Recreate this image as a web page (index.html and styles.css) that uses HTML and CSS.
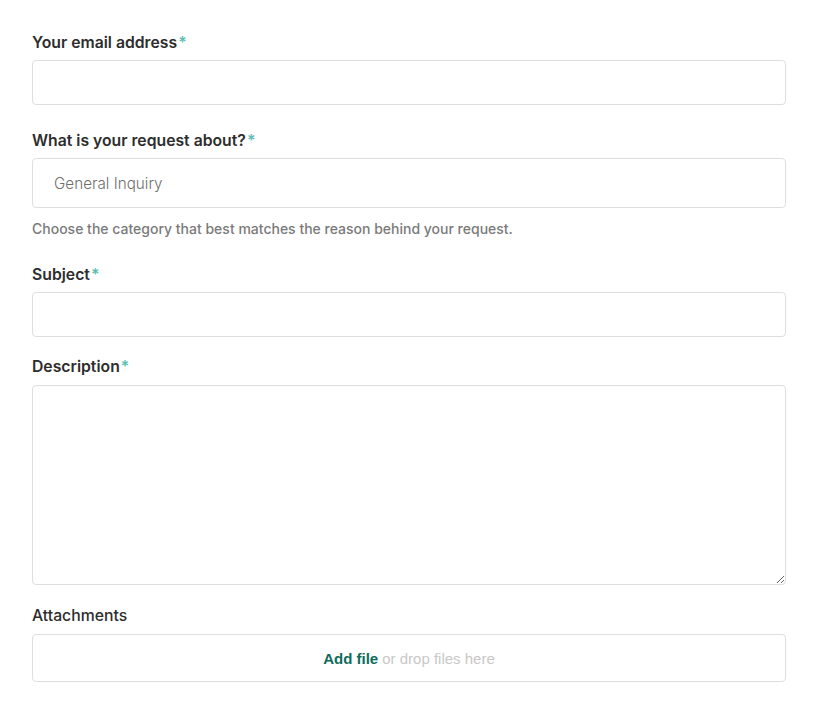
FILE: index.html
```html
<!DOCTYPE html>
<html lang="en">
<head>
<meta charset="utf-8">
<title>Submit a request</title>
<link rel="stylesheet" href="styles.css">
</head>
<body>
<form class="form">
  <div class="field field-email">
    <label class="label">Your email address<span class="req">*</span></label>
    <input class="input" type="email">
  </div>
  <div class="field field-about">
    <label class="label">What is your request about?<span class="req">*</span></label>
    <div class="select">General Inquiry</div>
    <p class="hint">Choose the category that best matches the reason behind your request.</p>
  </div>
  <div class="field field-subject">
    <label class="label">Subject<span class="req">*</span></label>
    <input class="input" type="text">
  </div>
  <div class="field field-desc">
    <label class="label">Description<span class="req">*</span></label>
    <textarea class="textarea"></textarea>
  </div>
  <div class="field field-attach">
    <label class="label">Attachments</label>
    <div class="dropzone"><a class="add-file">Add file</a> <span class="drop-text">or drop files here</span></div>
  </div>
</form>
</body>
</html>
```
FILE: styles.css
```css
html, body {
  margin: 0;
  padding: 0;
  background: #ffffff;
}
body {
  font-family: Inter, "Noto Sans", sans-serif;
  color: #2b2b2b;
}
.form {
  width: 754px;
  padding: 33px 32px 0 32px;
  display: flex;
  flex-direction: column;
}
.field {
  display: flex;
  flex-direction: column;
}
.field-email { margin-bottom: 26px; }
.field-about { margin-bottom: 27px; }
.field-subject { margin-bottom: 20px; }
.field-desc { margin-bottom: 21px; }
.label {
  font-size: 15.75px;
  line-height: 20px;
  font-weight: 600;
  color: #2d2d2d;
  margin-bottom: 7px;
}
.field-desc .label { margin-bottom: 8px; }
.field-attach .label { margin-bottom: 8px; font-weight: 500; }
.req {
  color: #5cbfb3;
  margin-left: 1px;
}
.input {
  box-sizing: border-box;
  height: 45px;
  width: 100%;
  border: 1px solid #dedede;
  border-radius: 4px;
  margin: 0;
  padding: 0 20px;
  font: inherit;
  background: #fff;
}
.select {
  box-sizing: border-box;
  height: 50px;
  border: 1px solid #dedede;
  border-radius: 4px;
  padding: 0 21px;
  display: flex;
  align-items: center;
  font-size: 15.25px;
  font-weight: 300;
  color: #6f6f6f;
}
.hint {
  margin: 12px 0 0 0;
  font-size: 14px;
  line-height: 18px;
  font-weight: 500;
  color: #7a7a7a;
}
.textarea {
  box-sizing: border-box;
  display: block;
  height: 200px;
  width: 100%;
  border: 1px solid #dedede;
  border-radius: 4px;
  margin: 0;
  padding: 10px 20px;
  font: inherit;
  resize: vertical;
  background: #fff;
}
.dropzone {
  box-sizing: border-box;
  height: 48px;
  border: 1px solid #dedede;
  border-radius: 4px;
  display: flex;
  align-items: center;
  justify-content: center;
  gap: 4px;
  font-family: "Liberation Sans", Arial, sans-serif;
  font-size: 15px;
}
.add-file {
  color: #0d6b5b;
  font-weight: 700;
  cursor: pointer;
}
.drop-text {
  color: #c8c8c8;
}
```
